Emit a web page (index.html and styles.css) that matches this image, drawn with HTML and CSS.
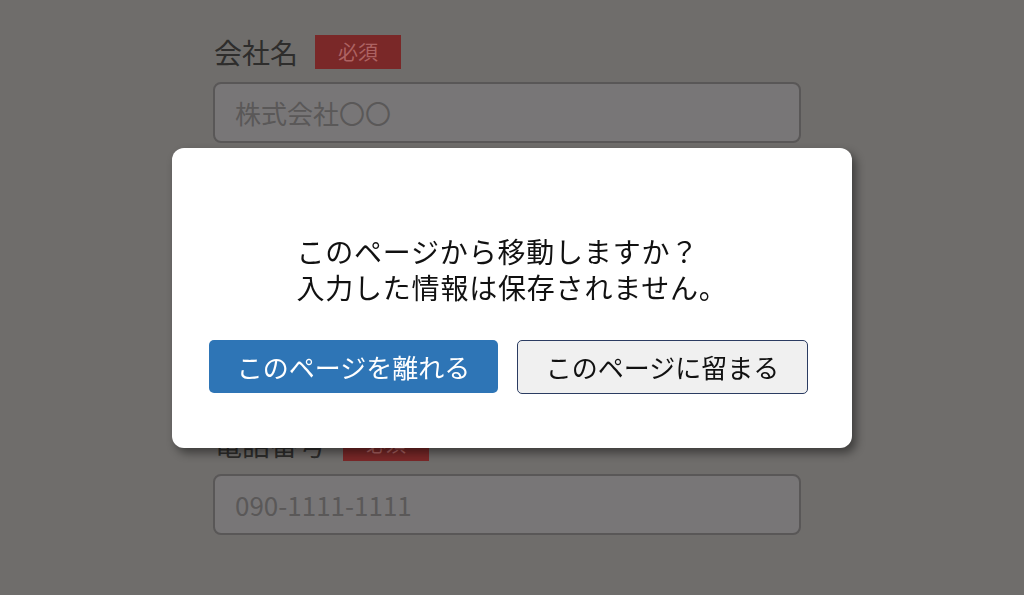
FILE: index.html
```html
<!DOCTYPE html>
<html lang="ja">
<head>
<meta charset="utf-8">
<title>お問い合わせフォーム</title>
<link rel="stylesheet" href="styles.css">
</head>
<body>
<main class="form">
  <div class="field">
    <div class="label-row"><span class="label">会社名</span><span class="badge">必須</span></div>
    <div class="input">株式会社〇〇</div>
  </div>
  <div class="field">
    <div class="label-row"><span class="label">電話番号</span><span class="badge">必須</span></div>
    <div class="input">090-1111-1111</div>
  </div>
</main>
<div class="overlay">
  <div class="dialog" role="dialog">
    <div class="message">
      <p class="line">このページから移動しますか？</p>
      <p class="line">入力した情報は保存されません。</p>
    </div>
    <div class="actions">
      <button class="btn btn-leave">このページを離れる</button>
      <button class="btn btn-stay">このページに留まる</button>
    </div>
  </div>
</div>
</body>
</html>
```
FILE: styles.css
```css
html, body {
  margin: 0;
  padding: 0;
}
body {
  width: 1024px;
  height: 595px;
  overflow: hidden;
  background: #6f6d6b;
  font-family: "Noto Sans CJK JP", "Noto Sans", sans-serif;
}
.form {
  width: 588px;
  margin-left: 213px;
  padding-top: 35px;
  display: flex;
  flex-direction: column;
  gap: 284px;
}
.field {
  display: flex;
  flex-direction: column;
  gap: 13px;
}
.label-row {
  display: flex;
  align-items: center;
  gap: 17px;
  height: 34px;
  padding-left: 1px;
}
.label {
  font-size: 28px;
  line-height: 34px;
  color: #2e2d2c;
}
.badge {
  background: #7a2828;
  color: #ad6262;
  font-size: 20px;
  line-height: 34px;
  height: 34px;
  padding: 0 23px;
}
.input {
  box-sizing: border-box;
  height: 61px;
  border: 2px solid #595757;
  border-radius: 8px;
  background: #787677;
  color: #5a5858;
  font-size: 26px;
  line-height: 57px;
  padding-left: 20px;
}
.overlay {
  position: fixed;
  inset: 0;
  display: flex;
  align-items: center;
  justify-content: center;
}
.dialog {
  box-sizing: border-box;
  width: 680px;
  height: 300px;
  background: #ffffff;
  border-radius: 12px;
  box-shadow: 4px 5px 10px rgba(0, 0, 0, 0.45);
  padding-top: 86px;
}
.message {
  margin: 0 auto;
  width: fit-content;
  display: flex;
  flex-direction: column;
  gap: 1px;
}
.line {
  margin: 0;
  font-size: 28px;
  letter-spacing: 0.8px;
  line-height: 35px;
  color: #111111;
}
.actions {
  display: flex;
  gap: 19px;
  margin-top: 35px;
  padding-left: 37px;
}
.btn {
  box-sizing: border-box;
  height: 53px;
  font-family: inherit;
  font-size: 26px;
  border-radius: 5px;
  padding: 0;
  cursor: pointer;
}
.btn-leave {
  width: 289px;
  background: #2e75b6;
  color: #ffffff;
  border: none;
}
.btn-stay {
  width: 291px;
  height: 54px;
  background: #f0f0f0;
  color: #111111;
  border: 1.5px solid #2b3c62;
}
```
